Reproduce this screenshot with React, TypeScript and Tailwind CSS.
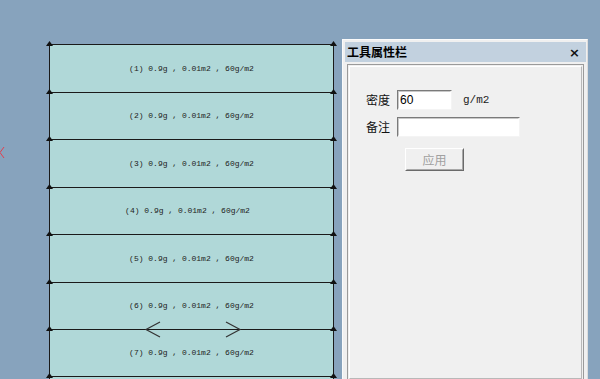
const rows = [
  { h: "h-[48px]", label: "(1) 0.9g , 0.01m2 , 60g/m2" },
  { h: "h-[47px]", label: "(2) 0.9g , 0.01m2 , 60g/m2" },
  { h: "h-[48px]", label: "(3) 0.9g , 0.01m2 , 60g/m2" },
  { h: "h-[47px]", label: "(4) 0.9g , 0.01m2 , 60g/m2", shift: true },
  { h: "h-[48px]", label: "(5) 0.9g , 0.01m2 , 60g/m2" },
  { h: "h-[47px]", label: "(6) 0.9g , 0.01m2 , 60g/m2" },
  { h: "h-[47px]", label: "(7) 0.9g , 0.01m2 , 60g/m2", arrows: true },
  { h: "h-[47px]", label: "" },
];

function Marker({ side }: { side: "l" | "r" }) {
  return (
    <svg
      width="7"
      height="6"
      viewBox="0 0 7 6"
      className={`absolute top-[-4px] ${side === "l" ? "left-[-4px]" : "right-[-4px]"}`}
    >
      <polygon points="3.5,0 7,5 0,5" fill="#111" />
    </svg>
  );
}

function Strip() {
  return (
    <div className="w-[285px] border-x border-[#1a1a1a] bg-[#b0d8d8]">
      {rows.map((r, i) => (
        <div
          key={i}
          className={`relative ${r.h} border-t border-[#1a1a1a] flex items-center justify-center`}
        >
          <Marker side="l" />
          <Marker side="r" />
          {r.label && (
            <span
              className={`text-[8px] text-[#222] whitespace-pre ${r.shift ? "-translate-x-[4px]" : ""}`}
              style={{ fontFamily: '"Liberation Mono", monospace' }}
            >
              {r.label}
            </span>
          )}
          {r.arrows && (
            <svg width="285" height="18" className="absolute left-0 top-[-9px]">
              <polyline points="110,1 96,8.5 110,16" fill="none" stroke="#333" strokeWidth="1.2" />
              <polyline points="176,1 190,8.5 176,16" fill="none" stroke="#333" strokeWidth="1.2" />
            </svg>
          )}
        </div>
      ))}
    </div>
  );
}

function Sunken({ w, children }: { w: string; children?: React.ReactNode }) {
  return (
    <div className={`${w} h-[20px] border border-t-[#7a7a7a] border-l-[#7a7a7a] border-b-[#f4f4f4] border-r-[#f4f4f4]`}>
      <div className="h-full bg-white border border-t-[#c8c8c8] border-l-[#c8c8c8] border-b-white border-r-white px-[1px] text-[12px] leading-[16px] text-black" style={{ fontFamily: '"Liberation Sans", sans-serif' }}>
        {children}
      </div>
    </div>
  );
}

function Panel() {
  const cjk = { fontFamily: '"Noto Sans CJK SC", sans-serif' };
  return (
    <div className="ml-[8px] mt-[39px] w-[246px] h-[345px] bg-[#f0f0f0] border border-[#fbfbfb] border-r-[#dcdcdc] p-[2px] pr-[1px] flex flex-col">
      <div className="h-[20px] bg-[#c2d1df] flex items-center justify-between pl-[2px] pr-[6px]">
        <span className="text-[12px] font-bold text-black leading-none" style={cjk}>
          工具属性栏
        </span>
        <span className="text-[13px] font-bold text-[#111] leading-none" style={{ fontFamily: '"DejaVu Sans", sans-serif' }}>
          ×
        </span>
      </div>
      <div className="flex-1 mt-[2px] ml-[2px] mr-[2px] border border-[#9a9a9a] p-[1px]">
        <div className="h-full border border-white border-r-[#b8b8b8] border-b-[#b8b8b8] bg-[#f0f0f0] pl-[16px] pt-[23px]">
          <div className="flex items-center">
            <span className="text-[12px] text-[#111] w-[31px]" style={cjk}>密度</span>
            <Sunken w="w-[55px]">60</Sunken>
            <span className="ml-[11px] text-[11px] text-[#222]" style={{ fontFamily: '"Liberation Mono", monospace' }}>g/m2</span>
          </div>
          <div className="flex items-center mt-[7px]">
            <span className="text-[12px] text-[#111] w-[31px]" style={cjk}>备注</span>
            <Sunken w="w-[123px]" />
          </div>
          <div className="mt-[11px] ml-[39px] w-[59px] h-[23px] border border-t-white border-l-white border-b-[#6a6a6a] border-r-[#6a6a6a] bg-[#f0f0f0]">
            <div className="h-full border border-transparent border-b-[#a8a8a8] border-r-[#a8a8a8] flex items-center justify-center text-[12px] text-[#a0a0a0]" style={cjk}>
              应用
            </div>
          </div>
        </div>
      </div>
    </div>
  );
}

export default function App() {
  return (
    <div className="relative w-[600px] h-[379px] overflow-hidden bg-[#87a3bd] flex items-start">
      <svg width="6" height="14" className="absolute left-0 top-[146px]">
        <polyline points="4,1 0,6.5 4,12" fill="none" stroke="#e04050" strokeWidth="1" />
      </svg>
      <div className="ml-[49px] mt-[44px]">
        <Strip />
      </div>
      <Panel />
    </div>
  );
}
